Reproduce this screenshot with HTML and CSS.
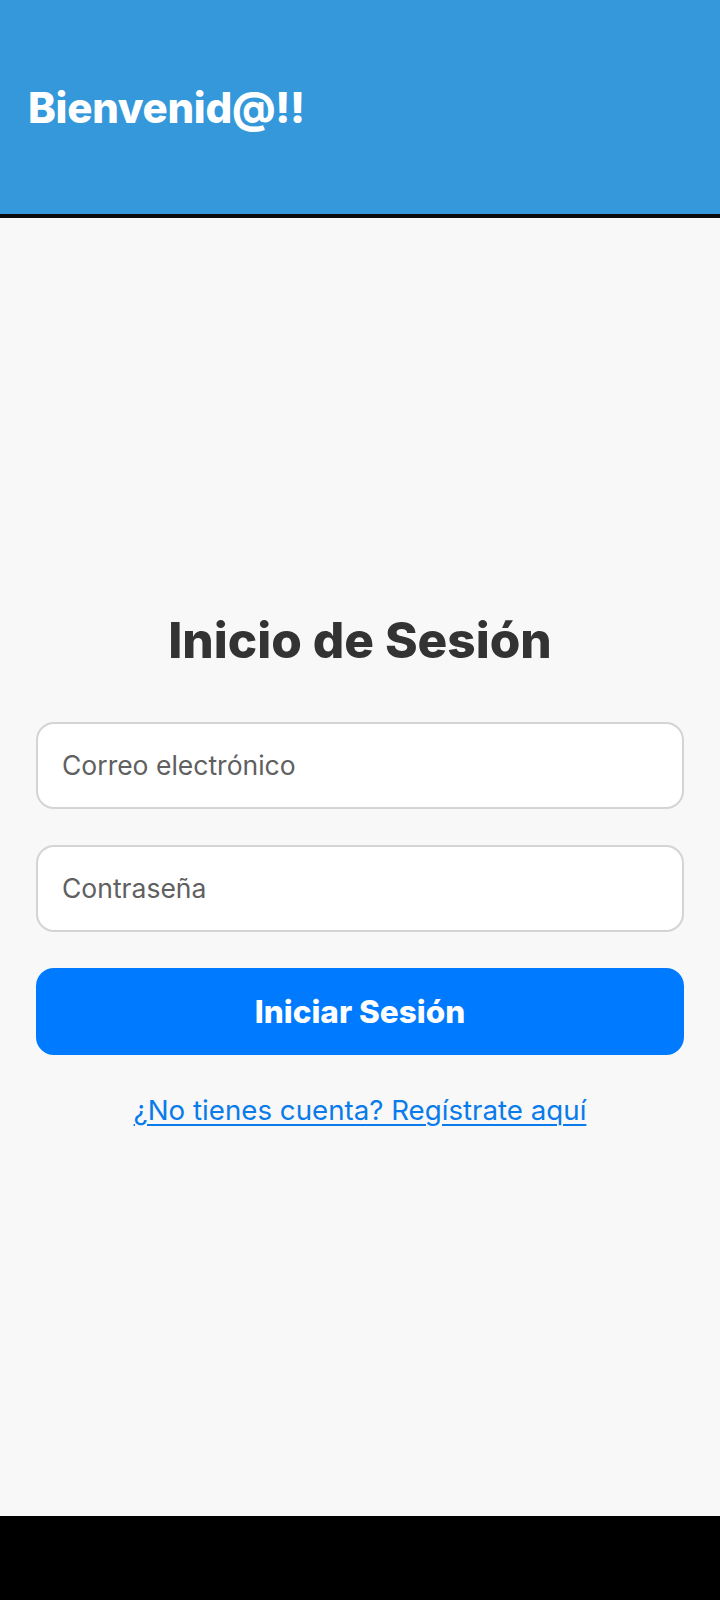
FILE: index.html
```html
<!DOCTYPE html>
<html lang="es">
<head>
<meta charset="utf-8">
<title>Inicio de Sesión</title>
<link rel="stylesheet" href="styles.css">
</head>
<body>
<div class="app">
  <header class="topbar">
    <h1 class="topbar-title">Bienvenid@!!</h1>
  </header>
  <main class="content">
    <h2 class="login-title">Inicio de Sesión</h2>
    <form class="login-form">
      <input class="field" type="email" placeholder="Correo electrónico">
      <input class="field" type="password" placeholder="Contraseña">
      <button class="submit" type="button">Iniciar Sesión</button>
    </form>
    <a class="register-link" href="#">¿No tienes cuenta? Regístrate aquí</a>
  </main>
  <div class="navbar"></div>
</div>
</body>
</html>
```

FILE: styles.css
```css
html, body {
  margin: 0;
  padding: 0;
}
body {
  background: #f8f8f8;
  font-family: "Inter", "Open Sans", sans-serif;
}
.app {
  min-height: 1600px;
  display: flex;
  flex-direction: column;
}
.topbar {
  height: 214px;
  background: #3598db;
  border-bottom: 4px solid #0a0a0a;
  display: flex;
  align-items: center;
  padding-left: 28px;
  box-sizing: content-box;
}
.topbar-title {
  margin: 0;
  color: #ffffff;
  font-size: 42px;
  font-weight: 800;
  letter-spacing: -0.3px;
}
.content {
  flex: 1;
  display: flex;
  flex-direction: column;
  align-items: center;
  justify-content: center;
  padding: 0 36px;
}
.login-title {
  margin: 0 0 50px;
  color: #333333;
  font-size: 49.5px;
  font-weight: 800;
  line-height: 64px;
}
.login-form {
  width: 100%;
  display: flex;
  flex-direction: column;
  gap: 36px;
}
.field {
  box-sizing: border-box;
  width: 100%;
  height: 87px;
  border: 2px solid #d4d4d4;
  border-radius: 18px;
  background: #ffffff;
  padding: 0 24px;
  font-family: inherit;
  font-size: 26.5px;
  color: #333;
  outline: none;
}
.field::placeholder {
  color: #606060;
}
.submit {
  height: 87px;
  border: none;
  border-radius: 18px;
  background: #007bff;
  color: #ffffff;
  font-family: inherit;
  font-size: 31.5px;
  font-weight: 800;
}
.register-link {
  margin-top: 38px;
  color: #0a7bea;
  font-size: 27.7px;
  text-decoration: underline;
  text-underline-offset: 4px;
  text-decoration-thickness: 2px;
}
.navbar {
  height: 84px;
  background: #000000;
}
```
